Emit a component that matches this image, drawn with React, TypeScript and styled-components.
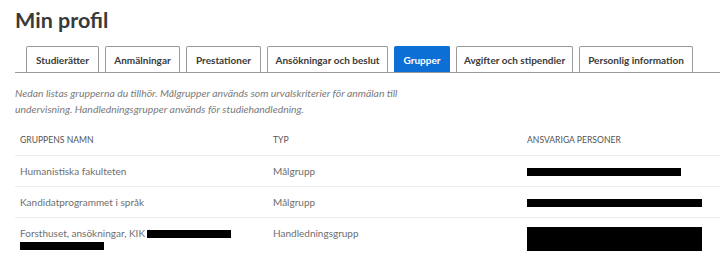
import styled, { createGlobalStyle } from 'styled-components';

const GlobalStyle = createGlobalStyle`
    body {
        margin: 0;
        background: #fff;
        font-family: Lato, "Open Sans", sans-serif;
        color: #666;
    }
`

const Page = styled.div`
    padding: 6px 0 0 15px;
    overflow: hidden;
`

const Title = styled.h1`
    margin: 0;
    font-size: 21.5px;
    line-height: 28px;
    font-weight: 700;
    color: #3a3a3a;
`

const TabBar = styled.div`
    display: flex;
    gap: 6px;
    margin-top: 12px;
    padding-left: 11px;
    border-bottom: 1px solid #9a9a9a;
`

const Tab = styled.div<{ $active?: boolean; $w: number }>`
    width: ${p => p.$w}px;
    height: 26px;
    box-sizing: border-box;
    display: flex;
    align-items: center;
    justify-content: center;
    font-size: 10px;
    font-weight: 700;
    white-space: nowrap;
    border: 1px solid ${p => p.$active ? '#0b6fd6' : '#9a9a9a'};
    border-bottom: none;
    border-radius: 2px 2px 0 0;
    background: ${p => p.$active ? '#0b6fd6' : '#fff'};
    color: ${p => p.$active ? '#fff' : '#3a3a3a'};
`

const Intro = styled.p`
    margin: 12px 0 0;
    font-size: 10.4px;
    line-height: 16px;
    font-style: italic;
    color: #7a7a7a;
`

const Table = styled.div`
    margin-top: 8px;
    display: grid;
    grid-template-columns: 253px 254px 1fr;
`

const Cell = styled.div<{ $head?: boolean }>`
    padding: 9px 5px;
    font-size: ${p => p.$head ? '8.6px' : '10px'};
    line-height: 12px;
    color: ${p => p.$head ? '#555' : '#6e6e6e'};
    text-transform: ${p => p.$head ? 'uppercase' : 'none'};
    border-bottom: 1px solid #ececec;
`

// black bars hiding names in the screenshot
const Redacted = styled.span<{ $w: number; $h?: number; $overlap?: boolean }>`
    display: inline-block;
    vertical-align: middle;
    width: ${p => p.$w}px;
    height: ${p => p.$h ?? 8}px;
    margin-left: ${p => p.$overlap ? '-3px' : '0'};
    background: #000;
`

const tabs: [string, number][] = [
    ['Studierätter', 73],
    ['Anmälningar', 75],
    ['Prestationer', 75],
    ['Ansökningar och beslut', 121],
    ['Grupper', 56],
    ['Avgifter och stipendier', 117],
    ['Personlig information', 114],
];

export default function App() {
    return (
        <Page>
            <GlobalStyle />
            <Title>Min profil</Title>
            <TabBar>
                {tabs.map(([t, w]) => <Tab key={t} $w={w} $active={t === 'Grupper'}>{t}</Tab>)}
            </TabBar>
            <Intro>
                Nedan listas grupperna du tillhör. Målgrupper används som urvalskriterier för anmälan till<br />
                undervisning. Handledningsgrupper används för studiehandledning.
            </Intro>
            <Table>
                <Cell $head>Gruppens namn</Cell>
                <Cell $head>Typ</Cell>
                <Cell $head>Ansvariga personer</Cell>

                <Cell>Humanistiska fakulteten</Cell>
                <Cell>Målgrupp</Cell>
                <Cell><Redacted $w={154} /></Cell>

                <Cell>Kandidatprogrammet i språk</Cell>
                <Cell>Målgrupp</Cell>
                <Cell><Redacted $w={175} /></Cell>

                <Cell>Forsthuset, ansökningar, KIK (<Redacted $w={84} $overlap /> <Redacted $w={84} /></Cell>
                <Cell>Handledningsgrupp</Cell>
                <Cell><Redacted $w={175} $h={24} /></Cell>
            </Table>
        </Page>
    );
}
